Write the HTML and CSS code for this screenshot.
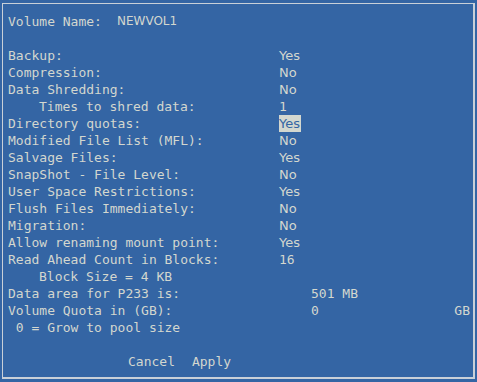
FILE: index.html
```html
<!DOCTYPE html>
<html>
<head>
<meta charset="utf-8">
<link rel="stylesheet" href="styles.css">
</head>
<body>
<div class="frame">
  <div class="row name-row"><span class="label">Volume Name:</span><span class="vname">NEWVOL1</span></div>
  <div class="row"></div>
  <div class="row"><span class="label">Backup:</span><span class="val">Yes</span></div>
  <div class="row"><span class="label">Compression:</span><span class="val">No</span></div>
  <div class="row"><span class="label">Data Shredding:</span><span class="val">No</span></div>
  <div class="row"><span class="label indent">Times to shred data:</span><span class="mval">1</span></div>
  <div class="row"><span class="label">Directory quotas:</span><span class="val"><span class="sel">Yes</span></span></div>
  <div class="row"><span class="label">Modified File List (MFL):</span><span class="val">No</span></div>
  <div class="row"><span class="label">Salvage Files:</span><span class="val">Yes</span></div>
  <div class="row"><span class="label">SnapShot - File Level:</span><span class="val">No</span></div>
  <div class="row"><span class="label">User Space Restrictions:</span><span class="val">Yes</span></div>
  <div class="row"><span class="label">Flush Files Immediately:</span><span class="val">No</span></div>
  <div class="row"><span class="label">Migration:</span><span class="val">No</span></div>
  <div class="row"><span class="label">Allow renaming mount point:</span><span class="val">Yes</span></div>
  <div class="row"><span class="label">Read Ahead Count in Blocks:</span><span class="mval">16</span></div>
  <div class="row"><span class="label indent">Block Size = 4 KB</span></div>
  <div class="row wide"><span class="label">Data area for P233 is:</span><span class="mval">501 MB</span></div>
  <div class="row wide"><span class="label">Volume Quota in (GB):</span><span class="mval">0</span><span class="unit">GB</span></div>
  <div class="row"><span class="label">&nbsp;0 = Grow to pool size</span></div>
  <div class="row"></div>
  <div class="buttons"><span class="btn">Cancel</span><span class="btn">Apply</span></div>
</div>
</body>
</html>
```
FILE: styles.css
```css
html, body {
  margin: 0;
  padding: 0;
  background: #3465a4;
}
body {
  width: 477px;
  height: 382px;
  overflow: hidden;
  color: #d3d7cf;
  font-family: "DejaVu Sans Mono", monospace;
  font-size: 13px;
}
.frame {
  box-sizing: border-box;
  margin: 3px 0 0 2px;
  width: 473px;
  height: 376px;
  border-top: 1px solid #c9d0d8;
  border-left: 1px solid #c9d0d8;
  border-right: 2px solid #c9d0d8;
  border-bottom: 2px solid #c9d0d8;
  padding: 9px 3px 0 5px;
}
.row {
  display: grid;
  grid-template-columns: 271px auto;
  height: 17px;
  line-height: 17px;
  white-space: pre;
}
.row.wide {
  grid-template-columns: 303px 1fr auto;
}
.name-row {
  grid-template-columns: 109px auto;
}
.indent {
  padding-left: 31px;
}
.vname {
  font-family: "DejaVu Sans", sans-serif;
  font-size: 12px;
}
.val {
  font-family: "DejaVu Sans", sans-serif;
  font-size: 13px;
}
.sel {
  background: #d3d7cf;
  color: #3465a4;
  display: inline-block;
  padding: 0 1px 0 0;
}
.unit {
  padding-right: 0;
}
.buttons {
  display: flex;
  gap: 17px;
  padding-left: 120px;
  height: 17px;
  line-height: 17px;
}
```
